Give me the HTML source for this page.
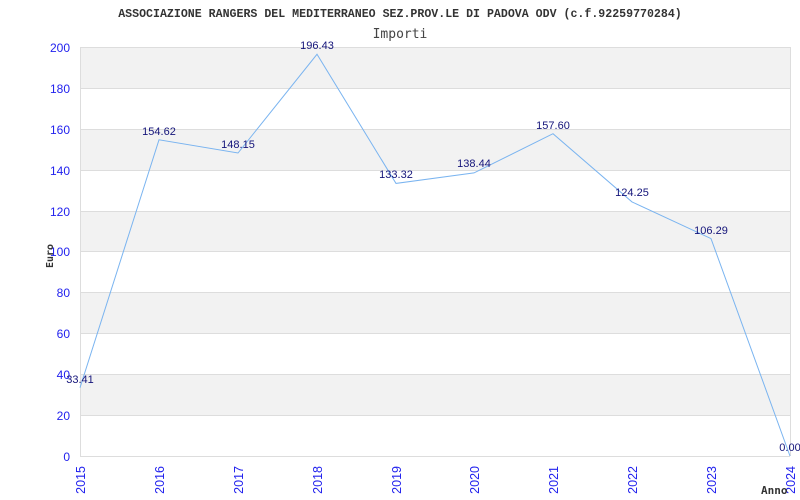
<!DOCTYPE html>
<html><head><style>body{margin:0;background:#fff;}svg{display:block}</style></head><body>
<svg width="800" height="500" xmlns="http://www.w3.org/2000/svg">
<rect width="800" height="500" fill="#fff"/>
<text x="400" y="17" text-anchor="middle" font-family="Liberation Mono, monospace" font-weight="bold" font-size="11.6" fill="#333">ASSOCIAZIONE RANGERS DEL MEDITERRANEO SEZ.PROV.LE DI PADOVA ODV (c.f.92259770284)</text>
<text x="400" y="38" text-anchor="middle" font-family="DejaVu Sans Mono, monospace" font-size="13" fill="#444">Importi</text>
<g fill="#f2f2f2">
<rect x="80" y="47" width="710" height="41"/>
<rect x="80" y="129" width="710" height="41"/>
<rect x="80" y="211" width="710" height="41"/>
<rect x="80" y="292" width="710" height="41"/>
<rect x="80" y="374" width="710" height="41"/>
</g>
<g stroke="#ddd" stroke-width="1">
<line x1="80" y1="47.5" x2="790" y2="47.5"/><line x1="80" y1="88.5" x2="790" y2="88.5"/>
<line x1="80" y1="129.5" x2="790" y2="129.5"/><line x1="80" y1="170.5" x2="790" y2="170.5"/>
<line x1="80" y1="211.5" x2="790" y2="211.5"/><line x1="80" y1="251.5" x2="790" y2="251.5"/>
<line x1="80" y1="292.5" x2="790" y2="292.5"/><line x1="80" y1="333.5" x2="790" y2="333.5"/>
<line x1="80" y1="374.5" x2="790" y2="374.5"/><line x1="80" y1="415.5" x2="790" y2="415.5"/>
<line x1="80" y1="456.5" x2="790" y2="456.5"/>
<line x1="80.5" y1="47" x2="80.5" y2="456"/><line x1="790.5" y1="47" x2="790.5" y2="456"/>
</g>
<g font-family="Liberation Sans, sans-serif" font-size="12" fill="#2222ee" text-anchor="end">
<text x="70" y="52">200</text><text x="70" y="93">180</text><text x="70" y="134">160</text>
<text x="70" y="175">140</text><text x="70" y="216">120</text><text x="70" y="256">100</text>
<text x="70" y="297">80</text><text x="70" y="338">60</text><text x="70" y="379">40</text>
<text x="70" y="420">20</text><text x="70" y="461">0</text>
</g>
<g font-family="Liberation Sans, sans-serif" font-size="12.5" fill="#2222ee" text-anchor="end">
<text transform="translate(85,466) rotate(-90)">2015</text>
<text transform="translate(164,466) rotate(-90)">2016</text>
<text transform="translate(243,466) rotate(-90)">2017</text>
<text transform="translate(322,466) rotate(-90)">2018</text>
<text transform="translate(401,466) rotate(-90)">2019</text>
<text transform="translate(479,466) rotate(-90)">2020</text>
<text transform="translate(558,466) rotate(-90)">2021</text>
<text transform="translate(637,466) rotate(-90)">2022</text>
<text transform="translate(716,466) rotate(-90)">2023</text>
<text transform="translate(795,466) rotate(-90)">2024</text>
</g>
<text transform="translate(53,268) rotate(-90)" font-family="DejaVu Sans Mono, monospace" font-weight="bold" font-size="10" fill="#333">Euro</text>
<text x="761" y="494" font-family="DejaVu Sans Mono, monospace" font-weight="bold" font-size="11" fill="#333">Anno</text>
<polyline fill="none" stroke="#7ab4f0" stroke-width="1" points="80,387.7 159,139.8 238,153 317,54.3 396,183.4 474,172.9 553,133.7 632,201.9 711,238.6 790,456"/>
<g font-family="Liberation Sans, sans-serif" font-size="11" fill="#14147a" text-anchor="middle">
<text x="80" y="383">33.41</text><text x="159" y="135">154.62</text><text x="238" y="148">148.15</text>
<text x="317" y="49">196.43</text><text x="396" y="178">133.32</text><text x="474" y="167">138.44</text>
<text x="553" y="129">157.60</text><text x="632" y="196">124.25</text><text x="711" y="234">106.29</text>
<text x="790" y="451">0.00</text>
</g>
</svg>
</body></html>
